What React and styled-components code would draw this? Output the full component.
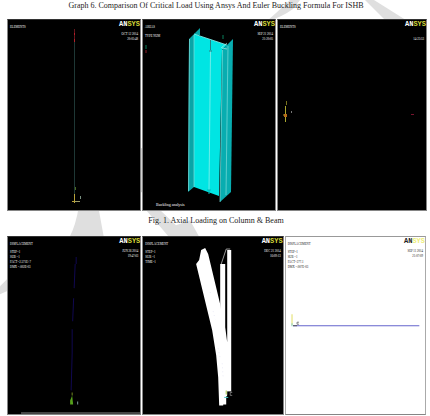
import React from 'react'
import styled, { createGlobalStyle } from 'styled-components'

const GlobalStyle = createGlobalStyle`
  * {
    box-sizing: border-box;
  }

  body {
    margin: 0;
    background: #ffffff;
    color: #1c1c1c;
    font-family: 'Liberation Serif', serif;
  }
`

const Page = styled.main`
  position: relative;
  padding-bottom: 1px;
  overflow: hidden;
`

const Watermark = styled.svg`
  position: absolute;
  top: 0;
  left: 0;
  width: 100%;
  height: 100%;
  z-index: -1;
`

const Heading = styled.h1`
  margin: 0;
  height: 19px;
  font-size: 8px;
  line-height: 12px;
  font-weight: normal;
  text-align: center;
  padding-left: 2px;
`

const Caption = styled.h2`
  margin: 0;
  height: 25px;
  padding: 4px 0 0 2px;
  font-size: 8px;
  line-height: 12px;
  font-weight: normal;
  text-align: center;
`

const PlotRow = styled.section`
  display: grid;
  grid-template-columns: ${({ $columns }) => $columns};
  column-gap: 1px;
  padding: ${({ $padding }) => $padding};
`

const Panel = styled.article`
  display: grid;
  grid-template-columns: minmax(0, 1fr);
  min-height: ${({ $height }) => $height};
  background: ${({ $light }) => ($light ? '#ffffff' : '#000000')};
  color: ${({ $light }) => ($light ? '#111111' : '#ffffff')};
  border: 1px solid ${({ $light }) => ($light ? '#aaaaaa' : '#858585')};
  border-top-color: ${({ $light }) => ($light ? '#999999' : '#333333')};
  border-bottom-color: #858585;
`

const Drawing = styled.svg`
  grid-area: 1 / 1;
  display: block;
  width: 100%;
  height: 100%;
`

const Labels = styled.div`
  grid-area: 1 / 1;
  display: flex;
  flex-direction: column;
  justify-content: space-between;
  font-family: 'Liberation Serif', serif;
  font-size: 3px;
  line-height: 5px;
`

const TopLabels = styled.header`
  display: flex;
  justify-content: space-between;
`

const Readout = styled.div`
  display: flex;
  flex-direction: column;
  padding: 5px 0 0 2px;
`

const Title = styled.span`
  margin-bottom: ${({ $gap }) => $gap};
`

const Stamp = styled.div`
  display: flex;
  flex-direction: column;
  align-items: flex-end;
`

const Time = styled.span`
  min-height: 5px;
  padding-right: 2px;
`

const Logo = styled.strong`
  height: 12px;
  font-family: 'Liberation Mono', monospace;
  font-size: 7px;
  line-height: 9px;
  color: ${({ $light }) => ($light ? '#222222' : '#ffffff')};
`

const LogoEnd = styled.span`
  color: ${({ $light }) => ($light ? '#eeee77' : '#d5d839')};
`

const Note = styled.p`
  margin: 0;
  padding: 0 0 3px 13px;
  font-size: 4px;
  line-height: 5px;
`

const Plot = ({ title, lines = [], date, time, note, light, gap = '3px', height, viewBox, children }) => (
  <Panel $light={light} $height={height}>
    <Drawing viewBox={viewBox} aria-hidden="true">{children}</Drawing>
    <Labels>
      <TopLabels>
        <Readout>
          <Title $gap={gap}>{title}</Title>
          {lines.map((line) => <span key={line}>{line}</span>)}
        </Readout>
        <Stamp>
          <Logo $light={light}>AN<LogoEnd $light={light}>SYS</LogoEnd></Logo>
          <Time>{date}</Time>
          <Time>{time}</Time>
        </Stamp>
      </TopLabels>
      {note && <Note>{note}</Note>}
    </Labels>
  </Panel>
)

const AxialLine = () => (
  <>
    <path d="M66.5 9V181" stroke="#1e3735" />
    <path d="M66.5 9V22" stroke="#65151b" />
    <path d="M66.5 13v2M66.5 19v3" stroke="#b51f28" />
    <path d="M67.5 167v3" stroke="#4b6a20" />
    <path d="M66.5 174v9M64 181.500h4" stroke="#b6a13b" />
    <path d="M67 181.500h5" stroke="#9b9b67" />
    <path d="M72.500 176v3" stroke="#799080" />
  </>
)

const SolidColumn = () => (
  <>
    <path d="M46 19L57 8V15L51 16V167L45 172Z" fill="#08a5a7" />
    <path d="M51 14L84 25L79 30L76 176L51 167Z" fill="#00e5e3" />
    <path d="M79 30L90 19L88 172L77 182Z" fill="#08adb0" />
    <path d="M46.500 19L45.500 171M51 15V167M79.500 30L77 182M85 26L83 175" fill="none" stroke="#80ddda" strokeWidth="0.7" />
    <path d="M51 14L84 25M67.500 31L66 170" fill="none" stroke="#8ceeea" strokeWidth="0.8" />
    <path d="M67.500 20V30M66 31h3" stroke="#267f84" />
    <path d="M78 28L84 23M79 28L84 29" stroke="#b2e7dc" strokeWidth="0.7" />
    <path d="M66 170v4M64 170h4" stroke="#00bdba" />
    <path d="M80 15v4M3 25v4" stroke="#087e5a" />
    <path d="M3 30v3" stroke="#8e1e29" />
  </>
)

const AxialPoint = () => (
  <>
    <path d="M7.500 86v16M5 95h4" stroke="#a9a62e" />
    <path d="M6 94h3v3H6z" fill="#b66a19" />
    <path d="M8.500 81v4" stroke="#75701d" />
    <path d="M13.500 91v2" stroke="#777777" />
    <path d="M133 94.500h3" stroke="#78142e" />
  </>
)

const BuckledLine = () => (
  <>
    <path d="M68 20V27M67 27L66 51M65.500 61L64.500 84M64 92V116L63 153" fill="none" stroke="#100850" />
    <path d="M64 155v3" stroke="#71871f" />
    <path d="M64 158L62 163V167H65Z" fill="#55a01b" />
    <path d="M69.500 164v3" stroke="#7b999d" />
    <path d="M13 175.500H132" stroke="#888888" />
  </>
)

const BuckledColumn = () => (
  <>
    <path d="M53 27L56 23L58 13L62 11L65 17L77 67L80 85V168H76L75 140L73 118L69 93Z" fill="#ffffff" />
    <path d="M77 27H82V90L84 105V13H88V155L83 159V167H77Z" fill="#ffffff" />
    <path d="M78 27L83 12L87 12" fill="none" stroke="#bbbbbb" strokeWidth="0.800" />
    <path d="M67 55l1 4M70 74l2 8M75 111l2 10M79 126l1 15" stroke="#d7d7ed" strokeWidth="0.500" strokeDasharray="1 3" />
    <path d="M84 154h4v6h-4z" fill="#000000" />
    <path d="M83 153v4" stroke="#a7c647" />
    <path d="M81 160h4" stroke="#49c8c6" />
    <path d="M89 155h-2v3h2" fill="none" stroke="#999999" strokeWidth="0.700" />
  </>
)

const BeamLine = () => (
  <>
    <path d="M7 88.500H133" stroke="#6464cc" />
    <path d="M6 77v3M6 80v8" stroke="#e2df65" />
    <path d="M6 86v3" stroke="#85cfc6" />
    <path d="M7 88.500h4" stroke="#555555" />
    <path d="M13 85h-2v2h2" fill="none" stroke="#555555" strokeWidth="0.700" />
  </>
)

const App = () => (
  <>
    <GlobalStyle />
    <Page>
      <Watermark viewBox="0 0 430 416" preserveAspectRatio="none" aria-hidden="true">
        <g fill="#dfdfdf">
          <path d="M266 22Q282 17 293 9L300 0H290L276 13Z" />
          <path d="M365 0H374L409 22H387Z" />
          <path d="M0 286L9 277V290L0 294Z" />
          <path d="M79 205H98L104 238H69Q76 225 79 205Z" />
          <path d="M142 205H155L176 225L190 220L200 238H170Z" />
        </g>
        <path d="M139 148h5v44h-5z" fill="#d2d2d2" />
      </Watermark>
      <Heading>Graph 6. Comparison Of Critical Load Using Ansys And Euler Buckling Formula For ISHB</Heading>
      <PlotRow $columns="134fr 134fr 150fr" $padding="0 3px 0 7px">
        <Plot title="ELEMENTS" date="OCT 12 2014" time="20:05:48" height="192px" viewBox="0 0 132 190">
          <AxialLine />
        </Plot>
        <Plot title="AREAS" lines={['TYPE NUM']} date="SEP 21 2014" time="21:20:05" note="Buckling analysis" gap="4px" height="192px" viewBox="0 0 132 190">
          <SolidColumn />
        </Plot>
        <Plot title="ELEMENTS" time="14:23:53" height="192px" viewBox="0 0 148 190">
          <AxialPoint />
        </Plot>
      </PlotRow>
      <Caption>Fig. 1. Axial Loading on Column &amp; Beam</Caption>
      <PlotRow $columns="134fr 141fr 141fr" $padding="0 4px 0 7px">
        <Plot title="DISPLACEMENT" lines={['STEP=1', 'SUB =1', 'FACT=2.571E+7', 'DMX =.002E-03']} date="JUN 26 2014" time="19:47:03" height="179px" viewBox="0 0 132 177">
          <BuckledLine />
        </Plot>
        <Plot title="DISPLACEMENT" lines={['STEP=1', 'SUB =1', 'TIME=1']} date="DEC 21 2014" time="16:09:13" height="179px" viewBox="0 0 139 177">
          <BuckledColumn />
        </Plot>
        <Plot light title="DISPLACEMENT" lines={['STEP=1', 'SUB =1', 'FACT=277.1', 'DMX =.007E-03']} date="SEP 11 2014" time="21:07:09" height="179px" viewBox="0 0 139 177">
          <BeamLine />
        </Plot>
      </PlotRow>
    </Page>
  </>
)

export default App
